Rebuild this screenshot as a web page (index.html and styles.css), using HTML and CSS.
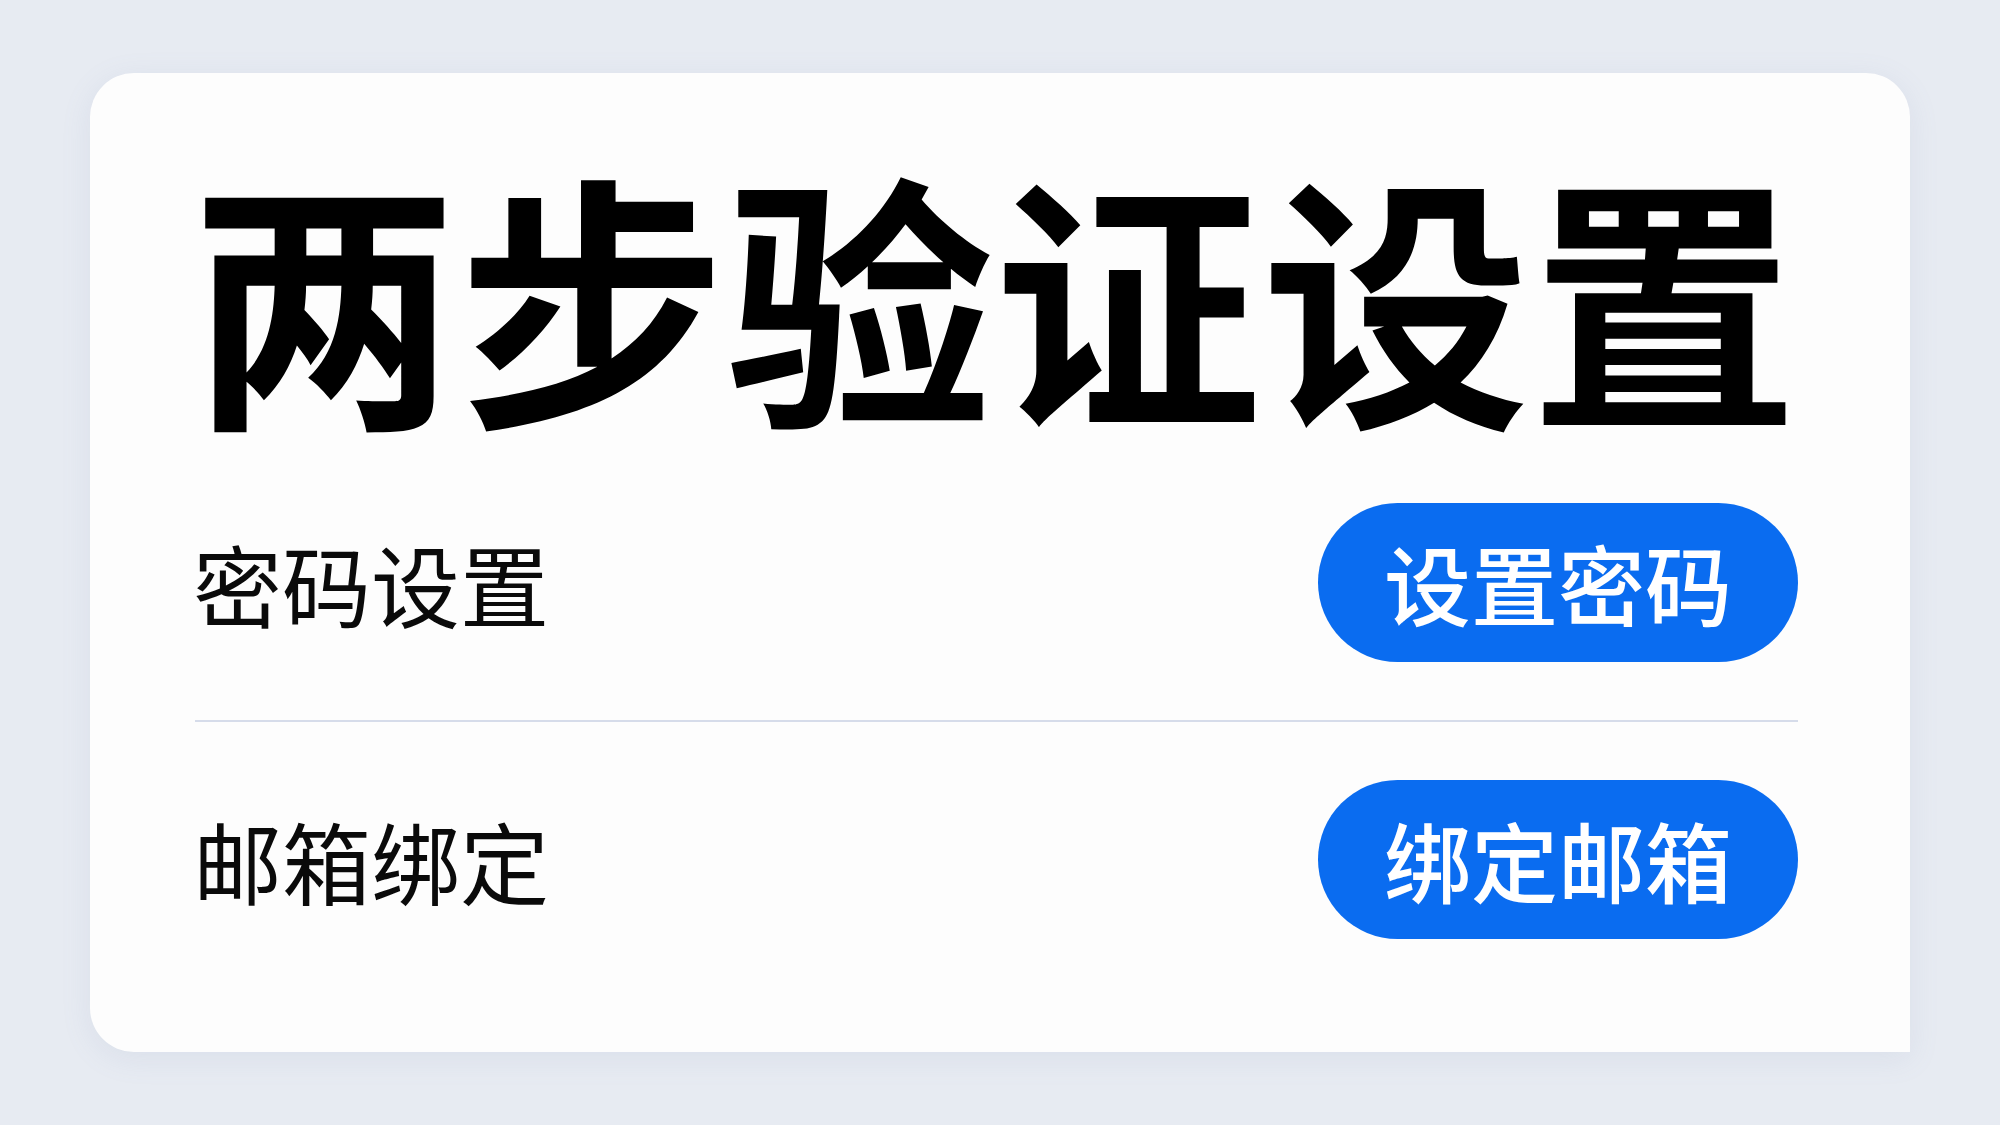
FILE: index.html
```html
<!DOCTYPE html>
<html lang="zh-CN">
<head>
  <meta charset="UTF-8" />
  <meta name="viewport" content="width=device-width, initial-scale=1.0"/>
  <title>两步验证设置</title>
  <link rel="stylesheet" href="styles.css">
</head>
<body>
  <div class="card">
    <h1 class="title">两步验证设置</h1>

    <div class="row">
      <span class="label">密码设置</span>
      <button class="action">设置密码</button>
    </div>

    <hr class="divider">

    <div class="row">
      <span class="label">邮箱绑定</span>
      <button class="action">绑定邮箱</button>
    </div>
  </div>
</body>
</html>
```

FILE: styles.css
```css
*, *::before, *::after { box-sizing: border-box; }
* {
  margin: 0;
  padding: 0;
  font-family: "Noto Sans CJK SC", "Noto Sans", sans-serif;
}

body {
  background-color: #e7ebf2;
  width: 2000px;
  height: 1125px;
  overflow: hidden;
  padding: 73px 0 0 90px;
}

.card {
  width: 1820px;
  height: 979px;
  background-color: #fdfdfd;
  border-radius: 44px 44px 0 44px;
  box-shadow: 0 6px 30px rgba(120, 140, 180, 0.12);
  padding: 84px 112px 0 103px;
}

.title {
  font-size: 268px;
  line-height: 1;
  font-weight: 700;
  color: #000;
  margin: 0 0 78px -3px;
}

.row {
  display: flex;
  justify-content: space-between;
  align-items: center;
  height: 159px;
}

.label {
  font-size: 89px;
  font-weight: 400;
  color: #0a0a0a;
  line-height: 1;
}

.action {
  height: 159px;
  padding: 0 66px;
  border: none;
  border-radius: 80px;
  background-color: #0a6cf0;
  color: #fff;
  font-size: 87px;
  font-weight: 500;
  line-height: 1;
  cursor: pointer;
}

.divider {
  border: none;
  height: 2px;
  background-color: #d6dcea;
  margin: 58px 0 58px 2px;
}
```
